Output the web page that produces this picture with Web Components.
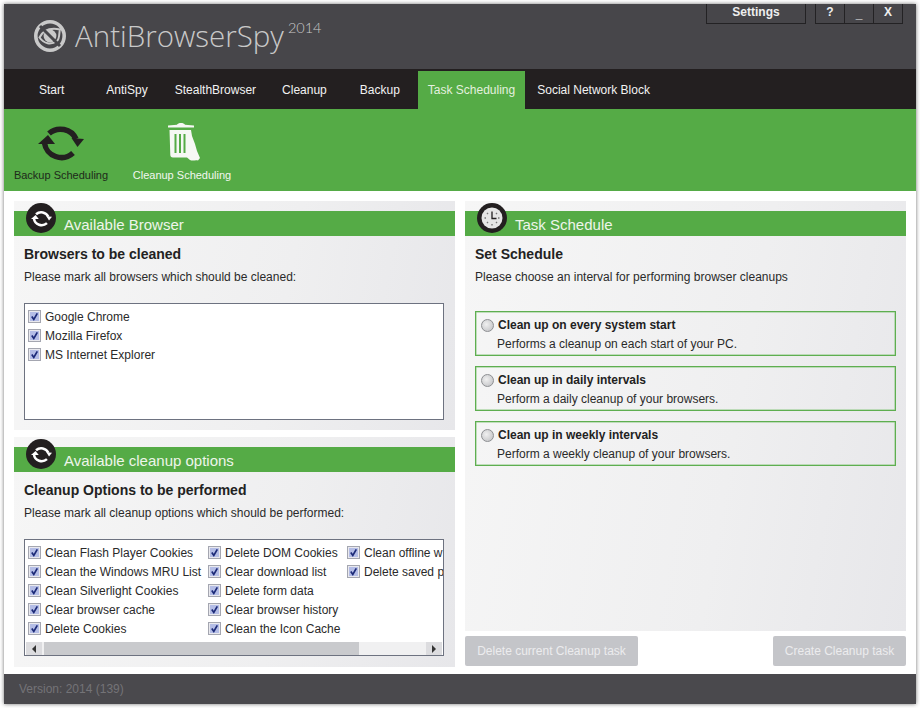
<!DOCTYPE html>
<html>
<head>
<meta charset="utf-8">
<title>AntiBrowserSpy</title>
<style>
    html, body { margin: 0; background: #fff; }
    body { height: 708px; overflow: hidden; font: 12px "Liberation Sans", Arial, sans-serif; color: #222; }
</style>
</head>
<body>
<app-window>
    <app-header slot="header"></app-header>
    <nav-bar slot="nav">
        <nav-tab space="19">Start</nav-tab>
        <nav-tab space="22">AntiSpy</nav-tab>
        <nav-tab space="7">StealthBrowser</nav-tab>
        <nav-tab space="6">Cleanup</nav-tab>
        <nav-tab space="13">Backup</nav-tab>
        <nav-tab space="8" active>Task Scheduling</nav-tab>
        <nav-tab space="2">Social Network Block</nav-tab>
    </nav-bar>
    <tool-bar slot="tools">
        <tool-item width="94" style="color:#1d2a1a">
            <sync-icon slot="icon" size="46" style="color:#231f20"></sync-icon>
            Backup Scheduling
        </tool-item>
        <tool-item width="98" style="color:#f2f7ef;margin-left:25px">
            <trash-icon slot="icon"></trash-icon>
            Cleanup Scheduling
        </tool-item>
    </tool-bar>

    <panel-box slot="left" label="Available Browser" heading="Browsers to be cleaned" hint="Please mark all browsers which should be cleaned:" style="height:229px">
        <sync-icon slot="badge" size="21" style="color:#fff"></sync-icon>
        <list-box>
            <check-list>
                <check-item>Google Chrome</check-item>
                <check-item>Mozilla Firefox</check-item>
                <check-item>MS Internet Explorer</check-item>
            </check-list>
        </list-box>
    </panel-box>

    <panel-box slot="left" label="Available cleanup options" heading="Cleanup Options to be performed" hint="Please mark all cleanup options which should be performed:" style="height:230px">
        <sync-icon slot="badge" size="21" style="color:#fff"></sync-icon>
        <list-box scroll>
            <check-list style="width:180px">
                <check-item>Clean Flash Player Cookies</check-item>
                <check-item>Clean the Windows MRU List</check-item>
                <check-item>Clean Silverlight Cookies</check-item>
                <check-item>Clear browser cache</check-item>
                <check-item>Delete Cookies</check-item>
            </check-list>
            <check-list style="width:139px">
                <check-item>Delete DOM Cookies</check-item>
                <check-item>Clear download list</check-item>
                <check-item>Delete form data</check-item>
                <check-item>Clear browser history</check-item>
                <check-item>Clean the Icon Cache</check-item>
            </check-list>
            <check-list style="width:94px">
                <check-item>Clean offline w</check-item>
                <check-item>Delete saved p</check-item>
            </check-list>
        </list-box>
    </panel-box>

    <panel-box slot="right" label="Task Schedule" heading="Set Schedule" hint="Please choose an interval for performing browser cleanups" style="height:430px">
        <clock-icon slot="badge"></clock-icon>
        <radio-group>
            <radio-option title-text="Clean up on every system start">Performs a cleanup on each start of your PC.</radio-option>
            <radio-option title-text="Clean up in daily intervals">Perform a daily cleanup of your browsers.</radio-option>
            <radio-option title-text="Clean up in weekly intervals">Perform a weekly cleanup of your browsers.</radio-option>
        </radio-group>
    </panel-box>
    <action-row slot="right">
        <flat-button style="width:173px">Delete current Cleanup task</flat-button>
        <flat-button style="width:133px">Create Cleanup task</flat-button>
    </action-row>

    <span slot="footer">Version: 2014 (139)</span>
</app-window>

<script>
customElements.define(
    'app-window',
    class extends HTMLElement {
        constructor() {
            super()
            this.attachShadow({ mode: 'open' })
            this.shadowRoot.innerHTML = `
                <style>
                    :host {
                        display: flex;
                        flex-direction: column;
                        width: 912px;
                        height: 700px;
                        margin: 4px 0 0 4px;
                        background: #fff;
                        box-shadow: 0 0 4px rgba(40, 40, 40, .65);
                    }
                    main {
                        flex: 1;
                        display: grid;
                        grid-template-columns: 441px 441px;
                        gap: 10px;
                        padding: 10px 10px 7px;
                    }
                    .col { display: flex; flex-direction: column; }
                    .left { gap: 7px; }
                    .right { gap: 5px; }
                    footer {
                        height: 30px;
                        display: flex;
                        align-items: center;
                        padding: 0 15px;
                        background: #4a494d;
                        color: #747377;
                        font-size: 12px;
                    }
                </style>
                <slot name="header"></slot>
                <slot name="nav"></slot>
                <slot name="tools"></slot>
                <main>
                    <div class="col left"><slot name="left"></slot></div>
                    <div class="col right"><slot name="right"></slot></div>
                </main>
                <footer><slot name="footer"></slot></footer>
            `
        }
    }
)

customElements.define(
    'app-header',
    class extends HTMLElement {
        constructor() {
            super()
            this.attachShadow({ mode: 'open' })
            this.shadowRoot.innerHTML = `
                <style>
                    :host {
                        display: flex;
                        justify-content: space-between;
                        align-items: flex-start;
                        height: 65px;
                        box-sizing: border-box;
                        padding: 0 13px 0 29px;
                        background: #47464a;
                        color: #c9c9c9;
                    }
                    .logo { display: flex; align-items: flex-start; padding-top: 15px; }
                    svg { display: block; }
                    .name {
                        font: 300 29.500px/34px "Open Sans", Lato, sans-serif;
                        margin: 0 0 0 8px;
                    }
                    sup {
                        font: 300 14.500px/18px Lato, "Open Sans", sans-serif;
                        margin: 0 0 0 4px;
                    }
                    .btns { display: flex; gap: 9px; font-weight: bold; color: #eee; }
                    .btn {
                        display: flex;
                        justify-content: center;
                        height: 20px;
                        line-height: 17px;
                        box-sizing: border-box;
                        border: 1px solid #232224;
                        border-top: 0;
                    }
                    .btn + .btn { border-left: 0; }
                    .group { display: flex; }
                    .group .btn { width: 29px; }
                    .group .btn:first-child { width: 30px; }
                    .group .btn:nth-child(2) { padding-top: 2px; height: 20px; }
                </style>
                <div class="logo">
                    <svg width="34" height="34" viewBox="0 0 34 34">
                        <circle cx="17" cy="17" r="14.2" fill="none" stroke="#c9c9c9" stroke-width="3.6"/>
                        <path d="M6.5 18.5C10 11.5 17 8.5 27 10.5C26 12 27 20 24 22C18 26 11 25 6.5 18.5Z" fill="none" stroke="#c9c9c9" stroke-width="2"/>
                        <circle cx="17" cy="17" r="6.4" fill="#c9c9c9"/>
                        <path d="M7 7L27 27" stroke="#47464a" stroke-width="3"/>
                    </svg>
                    <span class="name">AntiBrowserSpy</span><sup>2014</sup>
                </div>
                <div class="btns">
                    <div class="btn" style="width:100px">Settings</div>
                    <div class="group">
                        <div class="btn">?</div>
                        <div class="btn">_</div>
                        <div class="btn">X</div>
                    </div>
                </div>
            `
        }
    }
)

customElements.define(
    'nav-bar',
    class extends HTMLElement {
        constructor() {
            super()
            this.attachShadow({ mode: 'open' })
            this.shadowRoot.innerHTML = `
                <style>
                    :host {
                        display: flex;
                        align-items: flex-end;
                        height: 40px;
                        padding-left: 6px;
                        background: #231f20;
                    }
                </style>
                <slot></slot>
            `
        }
    }
)

customElements.define(
    'nav-tab',
    class extends HTMLElement {
        constructor() {
            super()
            this.attachShadow({ mode: 'open' })
            this.shadowRoot.innerHTML = `
                <style>
                    :host {
                        display: block;
                        height: 38px;
                        line-height: 38px;
                        padding: 0 10px;
                        color: #f2f2f2;
                        white-space: nowrap;
                    }
                    :host([active]) { background: #55ab46; color: #e4f0df; }
                </style>
                <slot></slot>
            `
        }
        connectedCallback() {
            this.style.marginLeft = (this.getAttribute('space') || 0) + 'px'
        }
    }
)

customElements.define(
    'tool-bar',
    class extends HTMLElement {
        constructor() {
            super()
            this.attachShadow({ mode: 'open' })
            this.shadowRoot.innerHTML = `
                <style>
                    :host {
                        display: flex;
                        height: 82px;
                        padding-left: 10px;
                        background: #55ab46;
                    }
                </style>
                <slot></slot>
            `
        }
    }
)

customElements.define(
    'tool-item',
    class extends HTMLElement {
        constructor() {
            super()
            this.attachShadow({ mode: 'open' })
            this.shadowRoot.innerHTML = `
                <style>
                    :host {
                        display: flex;
                        flex-direction: column;
                        align-items: center;
                        font-size: 11px;
                        white-space: nowrap;
                    }
                    .icon { height: 40px; margin-top: 13px; }
                    .label { margin-top: 7px; line-height: 13px; }
                </style>
                <div class="icon"><slot name="icon"></slot></div>
                <div class="label"><slot></slot></div>
            `
        }
        connectedCallback() {
            this.style.width = this.getAttribute('width') + 'px'
        }
    }
)

customElements.define(
    'sync-icon',
    class extends HTMLElement {
        constructor() {
            super()
            this.attachShadow({ mode: 'open' })
        }
        connectedCallback() {
            const size = this.getAttribute('size') || 46
            this.shadowRoot.innerHTML = `
                <style>
                    :host { display: block; line-height: 0; }
                </style>
                <svg width="${size}" height="${size * 40 / 46}" viewBox="0 0 46 40">
                    <path d="M11 11.5A17 16.5 0 0 1 38 17" fill="none" stroke="currentColor" stroke-width="5.5"/>
                    <path d="M35 31A17 16.5 0 0 1 6.5 21" fill="none" stroke="currentColor" stroke-width="5.5"/>
                    <path d="M33.5 16L46 17L39.5 25Z" fill="currentColor"/>
                    <path d="M10 13L0 22L17 22Z" fill="currentColor"/>
                </svg>
            `
        }
    }
)

customElements.define(
    'trash-icon',
    class extends HTMLElement {
        constructor() {
            super()
            this.attachShadow({ mode: 'open' })
            this.shadowRoot.innerHTML = `
                <style>
                    :host { display: block; line-height: 0; margin-left: 4px; }
                </style>
                <svg width="34" height="40" viewBox="0 0 34 40">
                    <path d="M1 5.500H27V3.500L18 2.800C17 .5 11 .5 10 2.800L1 3.500Z" fill="#f6f8f4"/>
                    <path d="M2.500 8H24L25 14L28 22L30 29L33 36L31 38.500C28 37.500 26 39.500 23 38L20 35.500H6C4 35.500 3.500 34.500 3.300 33Z" fill="#f6f8f4"/>
                    <path d="M7.500 12H9.500V31H7.500ZM12 12H14V31H12ZM16.500 12H18.500V31H16.500Z" fill="#55ab46"/>
                </svg>
            `
        }
    }
)

customElements.define(
    'clock-icon',
    class extends HTMLElement {
        constructor() {
            super()
            this.attachShadow({ mode: 'open' })
            this.shadowRoot.innerHTML = `
                <style>
                    :host { display: block; line-height: 0; }
                </style>
                <svg width="22" height="22" viewBox="0 0 22 22">
                    <circle cx="11" cy="11" r="10.500" fill="#e6e6e6"/>
                    <path d="M11 4.500V11.500H15.500" fill="none" stroke="#231f20" stroke-width="1.300"/>
                    <path d="M3.500 11h1.500M17 11h1.500M11 17v1.500M6 6l1 1M16 6l-1 1M6 16l1-1M16 16l-1-1" stroke="#777" stroke-width="1.400"/>
                </svg>
            `
        }
    }
)

customElements.define(
    'panel-box',
    class extends HTMLElement {
        constructor() {
            super()
            this.attachShadow({ mode: 'open' })
        }
        connectedCallback() {
            this.shadowRoot.innerHTML = `
                <style>
                    :host {
                        display: block;
                        box-sizing: border-box;
                        padding-top: 10px;
                        background: linear-gradient(100deg, #f6f6f6, #efeff0 60%, #e7e7ea);
                    }
                    .bar {
                        position: relative;
                        height: 25px;
                        line-height: 27px;
                        padding-left: 50px;
                        background: #55ab46;
                        color: #eef5ea;
                        font-size: 15px;
                    }
                    .badge {
                        position: absolute;
                        left: 12px;
                        top: -8px;
                        width: 30px;
                        height: 30px;
                        border-radius: 50%;
                        background: #231f20;
                        display: flex;
                        align-items: center;
                        justify-content: center;
                    }
                    .body { padding: 0 11px 0 10px; }
                    h2 {
                        margin: 11px 0 0;
                        font-size: 14px;
                        line-height: 14px;
                        color: #222;
                    }
                    p {
                        margin: 9px 0 19px;
                        line-height: 14px;
                        color: #2a2a2a;
                    }
                </style>
                <div class="bar">
                    <div class="badge"><slot name="badge"></slot></div>
                    ${this.getAttribute('label')}
                </div>
                <div class="body">
                    <h2>${this.getAttribute('heading')}</h2>
                    <p>${this.getAttribute('hint')}</p>
                    <slot></slot>
                </div>
            `
        }
    }
)

customElements.define(
    'list-box',
    class extends HTMLElement {
        constructor() {
            super()
            this.attachShadow({ mode: 'open' })
        }
        connectedCallback() {
            const scroll = this.hasAttribute('scroll')
            this.shadowRoot.innerHTML = `
                <style>
                    :host {
                        display: flex;
                        flex-direction: column;
                        height: 117px;
                        box-sizing: border-box;
                        border: 1px solid #6d7280;
                        background: #fff;
                    }
                    .items {
                        flex: 1;
                        display: flex;
                        overflow: hidden;
                        padding: 3px 0 0 3px;
                    }
                    .scroll {
                        display: flex;
                        align-items: center;
                        justify-content: space-between;
                        height: 13px;
                        margin: 0 1px;
                        background: #f0f0f1;
                    }
                    .end {
                        width: 16px;
                        height: 13px;
                        background: #dcdcdf;
                        display: flex;
                        align-items: center;
                        justify-content: center;
                    }
                    .thumb { width: 315px; height: 13px; margin: 0 auto 0 2px; background: #c9cacd; }
                    .tri { width: 0; height: 0; border: 4px solid transparent; }
                    .l { border-right-color: #333; border-left: 0; }
                    .r { border-left-color: #333; border-right: 0; }
                </style>
                <div class="items"><slot></slot></div>
                ${scroll ? `<div class="scroll">
                    <div class="end"><div class="tri l"></div></div>
                    <div class="thumb"></div>
                    <div class="end"><div class="tri r"></div></div>
                </div>` : ''}
            `
        }
    }
)

customElements.define(
    'check-list',
    class extends HTMLElement {
        constructor() {
            super()
            this.attachShadow({ mode: 'open' })
            this.shadowRoot.innerHTML = `
                <style>
                    :host { display: block; flex: none; }
                </style>
                <slot></slot>
            `
        }
    }
)

customElements.define(
    'check-item',
    class extends HTMLElement {
        constructor() {
            super()
            this.attachShadow({ mode: 'open' })
            this.shadowRoot.innerHTML = `
                <style>
                    :host {
                        display: flex;
                        align-items: center;
                        gap: 4px;
                        height: 19px;
                        white-space: nowrap;
                        color: #2a2a2a;
                    }
                    svg { flex: none; }
                </style>
                <svg width="13" height="13" viewBox="0 0 13 13">
                    <rect x=".5" y=".5" width="12" height="12" fill="#e9e9ee" stroke="#a4a6b0"/>
                    <rect x="2" y="2" width="9" height="9" fill="#b4bde6"/>
                    <path d="M3.800 6.500L5.800 9.500L9.300 3.300" fill="none" stroke="#1c2a78" stroke-width="1.700"/>
                </svg>
                <span><slot></slot></span>
            `
        }
    }
)

customElements.define(
    'radio-group',
    class extends HTMLElement {
        constructor() {
            super()
            this.attachShadow({ mode: 'open' })
            this.shadowRoot.innerHTML = `
                <style>
                    :host { display: flex; flex-direction: column; gap: 10px; padding-top: 8px; margin-right: -1px; }
                </style>
                <slot></slot>
            `
        }
    }
)

customElements.define(
    'radio-option',
    class extends HTMLElement {
        constructor() {
            super()
            this.attachShadow({ mode: 'open' })
        }
        connectedCallback() {
            this.shadowRoot.innerHTML = `
                <style>
                    :host {
                        display: block;
                        box-sizing: border-box;
                        height: 45px;
                        padding: 6px 0 0 5px;
                        border: 1px solid #5eae50;
                        box-shadow: inset 0 0 0 .5px #8cc782;
                    }
                    .top { display: flex; align-items: center; gap: 4px; font-weight: bold; line-height: 14px; color: #222; }
                    .dot {
                        width: 13px;
                        height: 13px;
                        box-sizing: border-box;
                        border-radius: 50%;
                        border: 1px solid #8d8f92;
                        background: radial-gradient(circle at 40% 40%, #f0f0f0, #bcbdc0);
                    }
                    .sub { margin: 5px 0 0 16px; line-height: 14px; color: #2a2a2a; }
                </style>
                <div class="top"><span class="dot"></span>${this.getAttribute('title-text')}</div>
                <div class="sub"><slot></slot></div>
            `
        }
    }
)

customElements.define(
    'action-row',
    class extends HTMLElement {
        constructor() {
            super()
            this.attachShadow({ mode: 'open' })
            this.shadowRoot.innerHTML = `
                <style>
                    :host { display: flex; justify-content: space-between; }
                </style>
                <slot></slot>
            `
        }
    }
)

customElements.define(
    'flat-button',
    class extends HTMLElement {
        constructor() {
            super()
            this.attachShadow({ mode: 'open' })
            this.shadowRoot.innerHTML = `
                <style>
                    :host {
                        display: flex;
                        align-items: center;
                        justify-content: center;
                        height: 30px;
                        border-radius: 2px;
                        background: #c4c5c9;
                        color: #ececee;
                        white-space: nowrap;
                    }
                </style>
                <slot></slot>
            `
        }
    }
)
</script>
</body>
</html>
